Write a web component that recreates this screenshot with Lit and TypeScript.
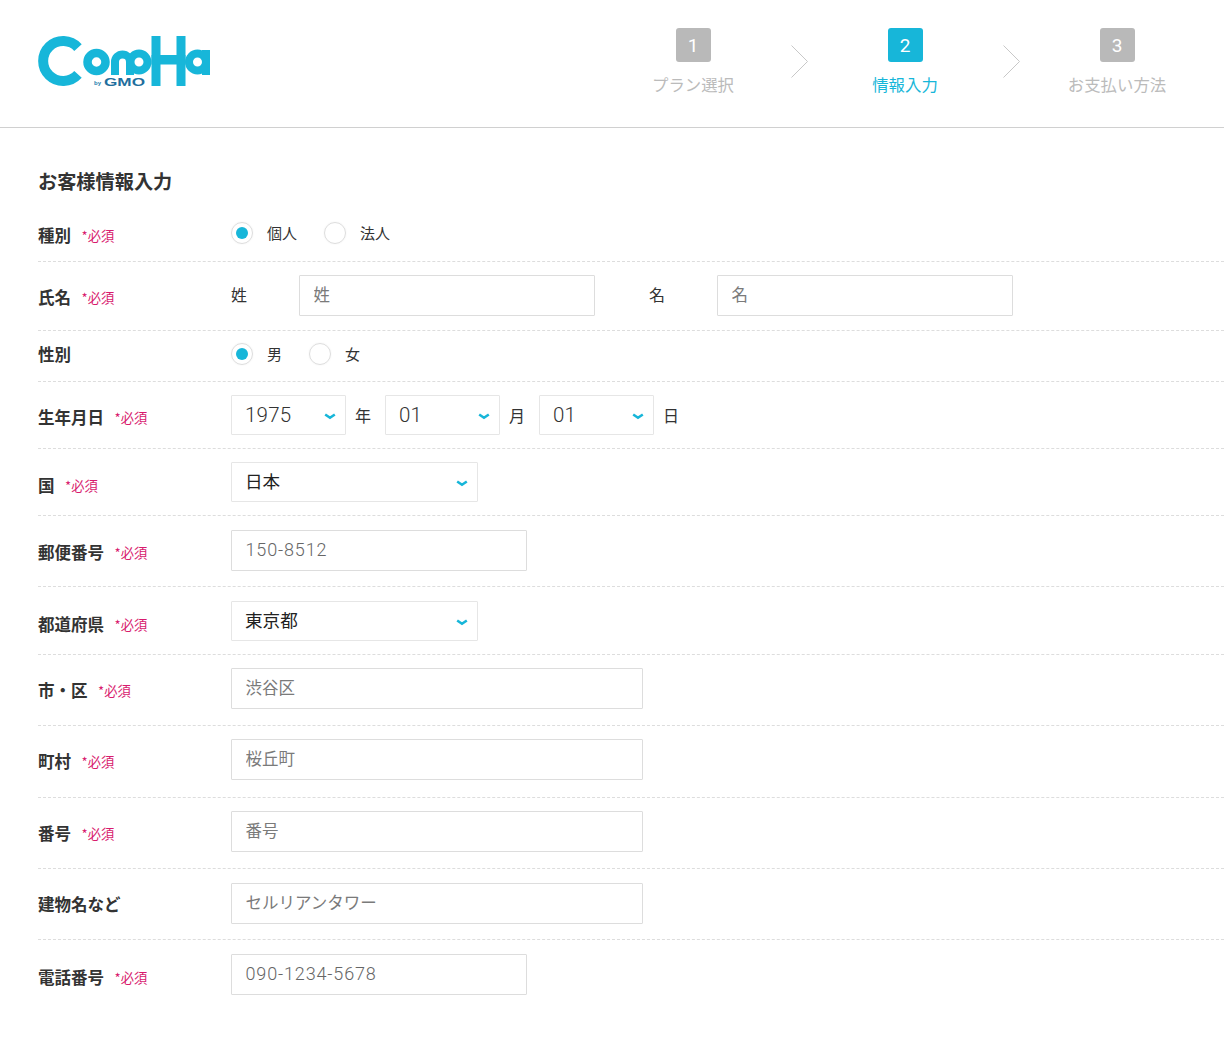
import { LitElement, html, css, svg } from "lit";
import { customElement } from "lit/decorators.js";

const chevron = html`<svg class="chev" width="12" height="7" viewBox="0 0 12 7"><path d="M1.2 1.4 L6 4.8 L10.8 1.4" fill="none" stroke="#17b6d9" stroke-width="2.5"/></svg>`;

const logo = html`<svg class="logo" width="174" height="54" viewBox="0 0 174 54">
  ${svg`<g fill="none" stroke="#17b6d9">
    <path d="M41 12.6 A20 20 0 1 0 41 39.4" stroke-width="10"/>
    <circle cx="59.5" cy="27" r="9" stroke-width="8.5"/>
    <path d="M78 40 V27 A7.5 7.5 0 0 1 93 27 V40" stroke-width="8"/>
    <circle cx="102" cy="27" r="8.5" stroke-width="8"/>
    <circle cx="160.5" cy="27" r="8.5" stroke-width="8"/>
  </g>
  <g fill="#17b6d9">
    <rect x="114.5" y="1" width="9" height="50"/>
    <rect x="139.5" y="1" width="9" height="50"/>
    <rect x="114.5" y="20" width="34" height="9.5"/>
    <rect x="165" y="15" width="8" height="25"/>
  </g>
  <rect x="55" y="41" width="54" height="12" fill="#fff"/>
  <text x="57" y="50" font-family="Liberation Sans" font-size="6" font-weight="700" fill="#1f7fae">by</text>
  <text x="67" y="50.5" font-family="Liberation Sans" font-size="11.5" font-weight="700" fill="#1f6f9e" textLength="41" lengthAdjust="spacingAndGlyphs">GMO</text>`}
</svg>`;

interface Row { label: string; req: boolean; h: number; top: number; lt: number; body: unknown }

@customElement("app-root")
export class AppRoot extends LitElement {
  static styles = css`
    :host { display: block; width: 1224px; height: 1040px; overflow: hidden; background: #fff; color: #333;
      font-family: "Noto Sans CJK JP", "Noto Sans", sans-serif; }
    header { height: 127px; border-bottom: 1px solid #d0d0d0; display: flex; justify-content: space-between; padding: 0 16px 0 37px; }
    .logo { margin-top: 35px; display: block; }
    .steps { display: flex; }
    .step { width: 182px; display: flex; flex-direction: column; align-items: center; padding-top: 28px; color: #bbb; font-size: 16.4px; }
    .num { width: 35px; height: 34px; border-radius: 3px; background: #b9b9b9; color: #fff; display: flex; align-items: center; justify-content: center;
      font: 400 19px Roboto, sans-serif; margin-bottom: 10px; }
    .step span { line-height: 24px; }
    .step.on { color: #17b6d9; }
    .step.on .num { background: #17b6d9; }
    .arrow { width: 30px; display: flex; justify-content: center; padding-top: 45px; }
    main { padding-left: 38px; }
    h1 { margin: 0; height: 80px; box-sizing: border-box; padding-top: 40px; font-size: 19.2px; line-height: 26px; font-weight: 700; color: #333; }
    .row { display: flex; box-sizing: border-box; border-bottom: 1px dashed #ddd; }
    .row:last-child { border-bottom: 0; }
    .lab { width: 193px; flex: none; display: flex; line-height: 24px; font-size: 16.5px; font-weight: 700; color: #333; margin-top: -1px; }
    .req { margin-left: 10.5px; font-size: 13.3px; font-weight: 400; color: #d81b6e; position: relative; top: 1px; }
    .body { display: flex; align-items: center; height: 41px; font-size: 15px; }
    .body.radios { height: 22px; }
    .radio { width: 22px; height: 22px; box-sizing: border-box; border: 1px solid #ddd; border-radius: 50%; display: flex; align-items: center; justify-content: center; box-shadow: 0 0 2px rgba(0,0,0,.06); }
    .radio i { width: 12px; height: 12px; border-radius: 50%; background: #17b6d9; }
    .rl { margin: 0 27px 0 14px; color: #333; font-size: 15px; padding-bottom: 1px; }
    input { box-sizing: border-box; height: 41px; border: 1px solid #ddd; border-radius: 1px; padding: 0 14px 3px 13.5px; font: 400 16.5px "Noto Sans CJK JP", sans-serif; color: #333; outline: 0; background: #fff; margin: 0; }
    input::placeholder { color: #7a7a7a; opacity: 1; }
    input.digits { font: 300 18px Roboto, sans-serif; letter-spacing: .85px; padding-bottom: 2px; }
    input.digits::placeholder { color: #666; }
    .w296 { width: 296px; }
    .w412 { width: 412px; }
    .name { font-size: 16px; width: 68px; padding-bottom: 3px; }
    .name.second { margin-left: 54px; }
    .sel { position: relative; display: block; height: 40px; margin-top: -1px; align-self: flex-start; }
    .sel select { appearance: none; -webkit-appearance: none; box-sizing: border-box; width: 100%; height: 40px; border: 1px solid #e6e6e6; border-radius: 1px; background: #fff; padding: 0 0 4px 13px; font: 400 17.6px "Noto Sans CJK JP", sans-serif; color: #222; outline: 0; margin: 0; }
    .sel select.digits { font: 300 20.5px Roboto, sans-serif; letter-spacing: .2px; color: #333; padding-bottom: 0; }
    .chev { position: absolute; right: 10px; top: 18px; }
    .s115 { width: 115px; }
    .s247 { width: 247px; }
    .unit { font-size: 16px; color: #333; width: 39px; padding: 0 0 4px 9px; box-sizing: border-box; }
  `;

  private sel(v: string, w: string, digits = false) {
    return html`<label class="sel ${w}"><select class=${digits ? "digits" : ""}><option>${v}</option></select>${chevron}</label>`;
  }
  private radio(on: boolean, t: string) {
    return html`<span class="radio">${on ? html`<i></i>` : ""}</span><span class="rl">${t}</span>`;
  }

  private get rows(): Row[] {
    return [
      { label: "種別", req: true, h: 54, top: 14, lt: 16, body: html`<div class="body radios">${this.radio(true, "個人")}${this.radio(false, "法人")}</div>` },
      { label: "氏名", req: true, h: 69, top: 13, lt: 24, body: html`<div class="body"><span class="name">姓</span><input class="w296" placeholder="姓"><span class="name second">名</span><input class="w296" placeholder="名"></div>` },
      { label: "性別", req: false, h: 51, top: 12, lt: 12, body: html`<div class="body radios">${this.radio(true, "男")}${this.radio(false, "女")}</div>` },
      { label: "生年月日", req: true, h: 67, top: 14, lt: 24, body: html`<div class="body">${this.sel("1975", "s115", true)}<span class="unit">年</span>${this.sel("01", "s115", true)}<span class="unit">月</span>${this.sel("01", "s115", true)}<span class="unit">日</span></div>` },
      { label: "国", req: true, h: 67, top: 14, lt: 25, body: html`<div class="body">${this.sel("日本", "s247")}</div>` },
      { label: "郵便番号", req: true, h: 71, top: 14, lt: 25, body: html`<div class="body"><input class="w296 digits" placeholder="150-8512"></div>` },
      { label: "都道府県", req: true, h: 68, top: 15, lt: 26, body: html`<div class="body">${this.sel("東京都", "s247")}</div>` },
      { label: "市・区", req: true, h: 71, top: 13, lt: 24, body: html`<div class="body"><input class="w412" placeholder="渋谷区"></div>` },
      { label: "町村", req: true, h: 72, top: 13, lt: 24, body: html`<div class="body"><input class="w412" placeholder="桜丘町"></div>` },
      { label: "番号", req: true, h: 71, top: 13, lt: 24, body: html`<div class="body"><input class="w412" placeholder="番号"></div>` },
      { label: "建物名など", req: false, h: 71, top: 14, lt: 24, body: html`<div class="body"><input class="w412" placeholder="セルリアンタワー"></div>` },
      { label: "電話番号", req: true, h: 100, top: 14, lt: 26, body: html`<div class="body"><input class="w296 digits" placeholder="090-1234-5678"></div>` },
    ];
  }

  render() {
    const arrow = html`<div class="arrow"><svg width="17" height="33" viewBox="0 0 17 33"><path d="M.5 .5 L16.5 16.5 L.5 32.5" fill="none" stroke="#c8c8c8" stroke-width="1"/></svg></div>`;
    return html`
      <header>
        ${logo}
        <div class="steps">
          <div class="step"><div class="num">1</div><span>プラン選択</span></div>
          ${arrow}
          <div class="step on"><div class="num">2</div><span>情報入力</span></div>
          ${arrow}
          <div class="step"><div class="num">3</div><span>お支払い方法</span></div>
        </div>
      </header>
      <main>
        <h1>お客様情報入力</h1>
        ${this.rows.map(r => html`
          <div class="row" style="height:${r.h}px">
            <div class="lab" style="padding-top:${r.lt}px"><span>${r.label}</span>${r.req ? html`<span class="req">*必須</span>` : ""}</div>
            <div style="padding-top:${r.top}px">${r.body}</div>
          </div>`)}
      </main>`;
  }
}
